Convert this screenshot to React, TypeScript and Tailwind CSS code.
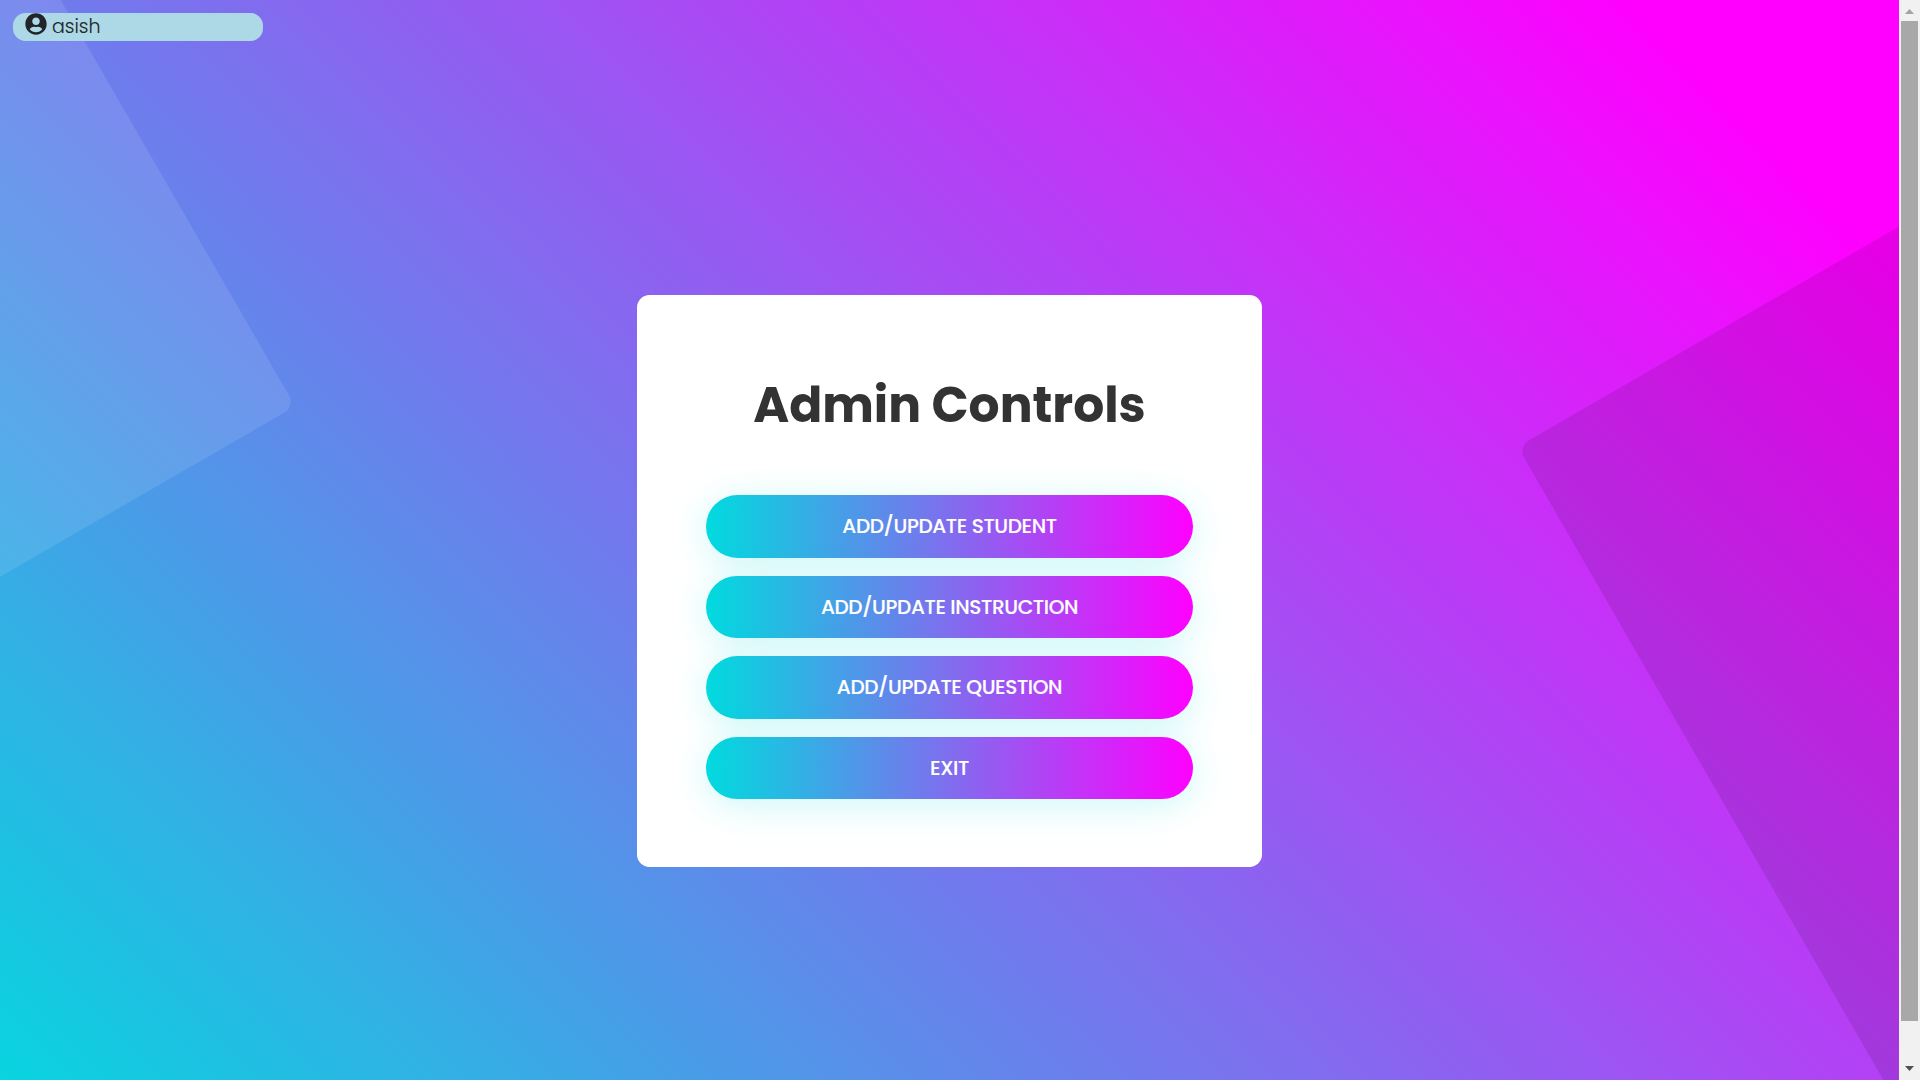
import React from "react";
import { FaUserCircle } from "react-icons/fa";

const actions = [
  "ADD/UPDATE STUDENT",
  "ADD/UPDATE INSTRUCTION",
  "ADD/UPDATE QUESTION",
  "EXIT",
];

function Scrollbar() {
  return (
    <div className="flex h-full w-[21px] shrink-0 flex-col items-center bg-[#f1f1f1]">
      <div className="flex h-[21px] items-center pt-0.5">
        <svg width="9" height="5" viewBox="0 0 9 5" className="fill-[#a3a3a3]">
          <path d="M4.5 0 9 5H0z" />
        </svg>
      </div>
      <div className="h-[1000px] w-[17px] bg-[#a8a8a8]" />
      <div className="flex-1" />
      <div className="flex h-[21px] items-center pb-0.5">
        <svg width="9" height="5" viewBox="0 0 9 5" className="fill-[#505050]">
          <path d="M0 0h9L4.5 5z" />
        </svg>
      </div>
    </div>
  );
}

export default function App() {
  return (
    <div className="flex h-[1080px] w-[1920px] overflow-hidden font-['Poppins','Inter',sans-serif]">
      <main className="relative h-full flex-1 overflow-hidden bg-[linear-gradient(45deg,#00dbde_-3%,#ff00ff_91%)]">
        <div className="absolute top-[-106px] left-[-592px] size-[750px] -rotate-30 rounded-[12.5px] bg-white/10" />
        <div className="absolute top-[209px] left-[1655px] size-[750px] -rotate-30 rounded-[12.5px] bg-black/10" />
        <div className="relative flex h-full flex-col items-center">
          <div className="mt-[13px] ml-[13px] flex h-7 w-[250px] items-center gap-[5px] self-start rounded-[12.5px] bg-[#add8e6] pl-3 text-[#212529]">
            <FaUserCircle size={22} className="mb-1.5" />
            <span className="mb-0.5 text-[19px] leading-none font-light [-webkit-text-stroke:0.1px_#212529]">asish</span>
          </div>
          <section className="mt-[254px] flex h-[572px] w-[625px] flex-col items-center rounded-[12.5px] bg-white px-[69px] pt-[80px]">
            <h1 className="text-[48.75px] leading-[60px] font-bold whitespace-nowrap text-[#333333]">Admin Controls</h1>
            <div className="mt-[60px] flex w-full flex-col gap-[18px]">
              {actions.map((label) => (
                <button
                  key={label}
                  className="h-[62.5px] w-full rounded-full bg-[linear-gradient(to_right,#00dbde,#ff00ff)] text-[20px] font-medium tracking-[-0.36px] text-white shadow-[0_6.25px_37.5px_0_rgba(3,216,222,0.2)] [-webkit-text-stroke:0.15px_white]"
                >
                  {label}
                </button>
              ))}
            </div>
          </section>
        </div>
      </main>
      <Scrollbar />
    </div>
  );
}
